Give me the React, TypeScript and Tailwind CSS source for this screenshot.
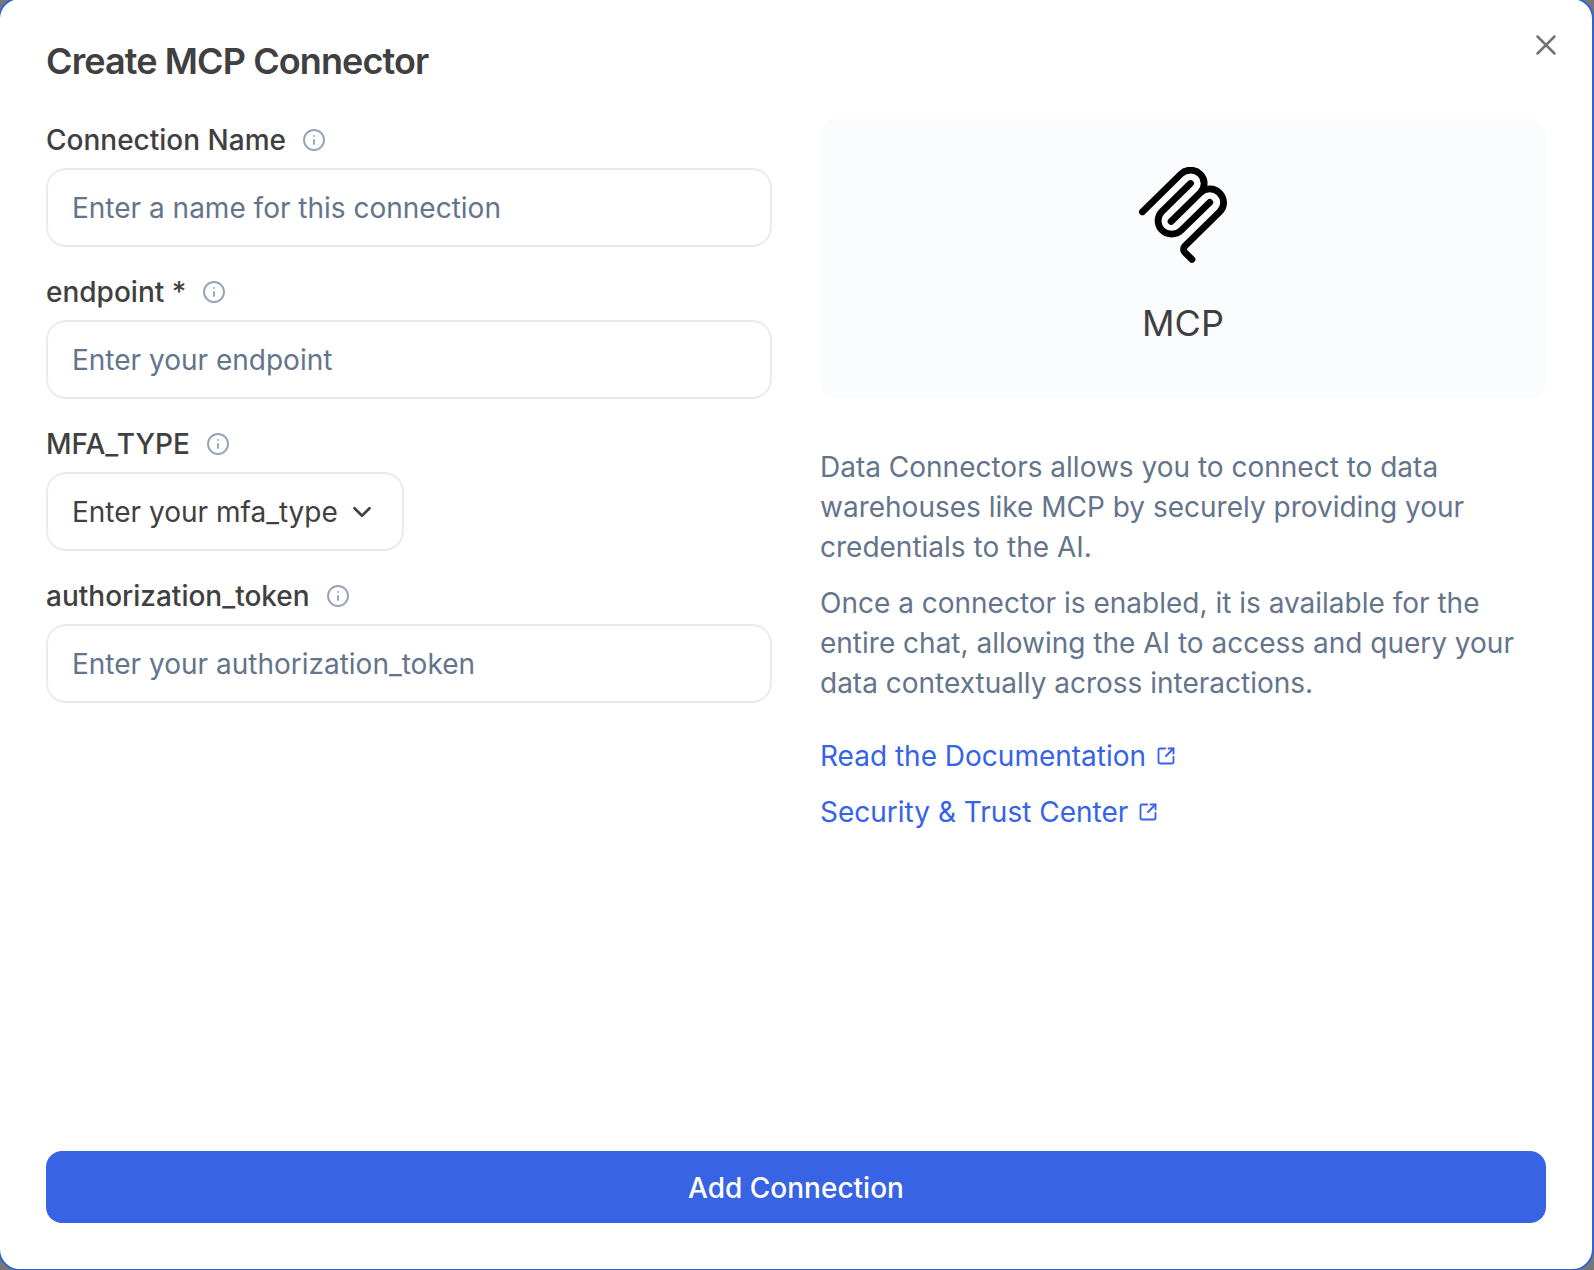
import React from 'react';
import { ChevronDown, Info, SquareArrowOutUpRight, X } from 'lucide-react';

const McpLogo = () => (
  <svg viewBox="0 0 24 24" fill="#000" fillRule="evenodd" className="h-24 w-24">
    <path d="M15.688 2.343a2.588 2.588 0 00-3.61 0l-9.626 9.44a.863.863 0 01-1.203 0 .823.823 0 010-1.18l9.626-9.44a4.313 4.313 0 016.016 0 4.116 4.116 0 011.204 3.54 4.3 4.3 0 013.609 1.18l.05.05a4.115 4.115 0 010 5.9l-8.706 8.537a.274.274 0 000 .393l1.788 1.754a.823.823 0 010 1.18.863.863 0 01-1.203 0l-1.788-1.753a1.92 1.92 0 010-2.754l8.706-8.538a2.47 2.47 0 000-3.54l-.05-.049a2.588 2.588 0 00-3.607-.003l-7.172 7.034-.002.002-.098.097a.863.863 0 01-1.204 0 .823.823 0 010-1.18l7.273-7.133a2.47 2.47 0 00-.003-3.537z" />
    <path d="M14.485 4.703a.823.823 0 000-1.18.863.863 0 00-1.204 0l-7.119 6.982a4.115 4.115 0 000 5.9 4.314 4.314 0 006.016 0l7.12-6.982a.823.823 0 000-1.18.863.863 0 00-1.204 0l-7.119 6.982a2.588 2.588 0 01-3.61 0 2.47 2.47 0 010-3.54l7.12-6.982z" />
  </svg>
);

const FieldLabel = ({ children }: { children: React.ReactNode }) => (
  <div className="flex h-[41px] items-center gap-[16px] font-medium text-[#404040]">
    <span>{children}</span>
    <Info size={24} strokeWidth={1.9} className="text-[#94a3b8]" />
  </div>
);

const TextField = ({ label, placeholder }: { label: string; placeholder: string }) => (
  <div className="flex flex-col gap-[8px]">
    <FieldLabel>{label}</FieldLabel>
    <input
      placeholder={placeholder}
      className="h-[79px] w-full rounded-[20px] border-2 border-[#ebebed] bg-white px-[24px] outline-none placeholder:text-[#64748b]"
    />
  </div>
);

const DocLink = ({ children }: { children: React.ReactNode }) => (
  <a className="flex items-center gap-[10px] text-[#3563e9]">
    {children}
    <SquareArrowOutUpRight size={20} strokeWidth={2.2} />
  </a>
);

export default function App() {
  return (
    <div className="h-[1270px] w-full overflow-hidden bg-[#777777] font-['Inter',sans-serif] text-[28px] leading-[40px]">
      <div className="relative -ml-[2px] -mt-[3px] flex h-[1274px] flex-col rounded-[22px] border-2 border-[#2e64cf] bg-white pb-[46px] pl-[46px] pr-[46px] pt-[38px]">
        <h1 className="text-[36px] font-semibold leading-[48px] tracking-tight text-[#404040]">Create MCP Connector</h1>
        <button className="absolute right-[29px] top-[29px] text-[#737373]">
          <X size={34} strokeWidth={1.8} />
        </button>

        <div className="mt-[34px] grid flex-1 grid-cols-2 gap-[48px]">
          <div className="flex flex-col gap-[24px]">
            <TextField label="Connection Name" placeholder="Enter a name for this connection" />
            <TextField label="endpoint *" placeholder="Enter your endpoint" />
            <div className="flex flex-col items-start gap-[8px]">
              <FieldLabel>MFA_TYPE</FieldLabel>
              <button className="flex h-[79px] w-[358px] items-center justify-between rounded-[20px] border-2 border-[#ebebed] bg-white pl-[24px] pr-[25px] text-[#404040]">
                Enter your mfa_type
                <ChevronDown size={30} strokeWidth={2.1} />
              </button>
            </div>
            <TextField label="authorization_token" placeholder="Enter your authorization_token" />
          </div>

          <div className="flex flex-col text-[#64748b]">
            <div className="flex h-[279px] flex-col items-center rounded-[16px] bg-[#fbfcfe] pt-[48px]">
              <McpLogo />
              <div className="mt-[38px] text-[36px] leading-[44px] text-[#404040]">MCP</div>
            </div>
            <p className="mt-[49px]">
              Data Connectors allows you to connect to data warehouses like MCP by securely providing your credentials to the AI.
            </p>
            <p className="mt-[16px]">
              Once a connector is enabled, it is available for the entire chat, allowing the AI to access and query your data contextually across interactions.
            </p>
            <div className="mt-[33px] flex flex-col gap-[16px]">
              <DocLink>Read the Documentation</DocLink>
              <DocLink>Security &amp; Trust Center</DocLink>
            </div>
          </div>
        </div>

        <button className="h-[72px] w-full rounded-[16px] bg-[#3963e5] pt-[1px] font-medium text-white">Add Connection</button>
      </div>
    </div>
  );
}
